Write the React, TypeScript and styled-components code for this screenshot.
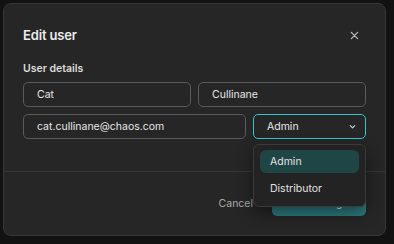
import styled, { createGlobalStyle } from "styled-components";

const GlobalStyle = createGlobalStyle`
  html, body {
    margin: 0;
    padding: 0;
    background: #121212;
    font-family: Inter, "Noto Sans", sans-serif;
    -webkit-font-smoothing: antialiased;
  }
`;

const Page = styled.div`
  width: 394px;
  height: 244px;
  padding: 3px 0 0 3px;
  box-sizing: border-box;
`;

const Dialog = styled.div`
  position: relative;
  width: 383px;
  height: 233px;
  box-sizing: border-box;
  background: #262626;
  border: 1px solid #363636;
  border-radius: 8px;
  display: flex;
  flex-direction: column;
`;

const Header = styled.div`
  display: flex;
  align-items: center;
  justify-content: space-between;
  padding: 21px 19px 0;
  height: 20px;
`;

const Title = styled.h2`
  margin: 0;
  font-size: 13px;
  font-weight: 600;
  letter-spacing: -0.15px;
  color: #ececec;
`;

const CloseButton = styled.button`
  border: none;
  background: none;
  padding: 0;
  margin-right: 5px;
  width: 14px;
  height: 14px;
  display: flex;
  align-items: center;
  justify-content: center;
  color: #bdbdbd;
  cursor: pointer;
`;

const Body = styled.div`
  padding: 17px 19px 32px;
  border-bottom: 1px solid #363636;
`;

const SectionLabel = styled.div`
  font-size: 10.5px;
  font-weight: 600;
  color: #dcdcdc;
  line-height: 14px;
  margin-bottom: 6px;
`;

const Row = styled.div<{ $cols: string }>`
  display: grid;
  grid-template-columns: ${({ $cols }) => $cols};
  gap: 7px;
  & + & {
    margin-top: 7px;
  }
`;

const Input = styled.div<{ $focused?: boolean }>`
  position: relative;
  height: 25px;
  box-sizing: border-box;
  border: 1px solid ${({ $focused }) => ($focused ? "#35c3cf" : "#5a5a5a")};
  border-radius: 5px;
  padding: 0 13px;
  display: flex;
  align-items: center;
  justify-content: space-between;
  font-size: 10.5px;
  color: #e6e6e6;
`;

const Chevron = styled.svg`
  width: 9px;
  height: 9px;
  color: #cfcfcf;
  margin-right: -5px;
`;

const Menu = styled.div`
  position: absolute;
  top: 29px;
  left: -1px;
  right: -1px;
  z-index: 2;
  background: #232323;
  border: 1px solid #3a3a3a;
  border-radius: 6px;
  box-shadow: 0 6px 16px rgba(0, 0, 0, 0.45);
  padding: 5px 6px 6px;
  display: flex;
  flex-direction: column;
  gap: 4px;
`;

const MenuItem = styled.div<{ $active?: boolean }>`
  height: 23px;
  border-radius: 6px;
  padding: 0 10px;
  display: flex;
  align-items: center;
  font-size: 10.5px;
  color: #e2e2e2;
  background: ${({ $active }) => ($active ? "#1f4545" : "transparent")};
`;

const Footer = styled.div`
  flex: 1;
  display: flex;
  justify-content: flex-end;
  align-items: flex-start;
  padding: 19px 19px 0;
  gap: 5px;
`;

const GhostButton = styled.button`
  border: none;
  background: none;
  height: 25px;
  padding: 0 14px;
  font-family: inherit;
  font-size: 10.5px;
  color: #a9a9a9;
`;

const PrimaryButton = styled.button`
  border: none;
  height: 25px;
  width: 94px;
  border-radius: 5px;
  background: #2c7a7e;
  font-family: inherit;
  font-size: 10.5px;
  font-weight: 500;
  color: #d7eeee;
`;

export default function App() {
  return (
    <>
      <GlobalStyle />
      <Page>
        <Dialog>
          <Header>
            <Title>Edit user</Title>
            <CloseButton aria-label="Close">
              <svg width="9" height="9" viewBox="0 0 10 10" fill="none">
                <path
                  d="M1.5 1.5l7 7M8.5 1.5l-7 7"
                  stroke="currentColor"
                  strokeWidth="1.4"
                  strokeLinecap="round"
                />
              </svg>
            </CloseButton>
          </Header>
          <Body>
            <SectionLabel>User details</SectionLabel>
            <Row $cols="1fr 1fr">
              <Input>Cat</Input>
              <Input>Cullinane</Input>
            </Row>
            <Row $cols="223px 1fr">
              <Input>cat.cullinane@chaos.com</Input>
              <Input $focused>
                Admin
                <Chevron viewBox="0 0 10 10" fill="none">
                  <path
                    d="M2.5 4l2.5 2.5L7.5 4"
                    stroke="currentColor"
                    strokeWidth="1.3"
                    strokeLinecap="round"
                    strokeLinejoin="round"
                  />
                </Chevron>
                <Menu>
                  <MenuItem $active>Admin</MenuItem>
                  <MenuItem>Distributor</MenuItem>
                </Menu>
              </Input>
            </Row>
          </Body>
          <Footer>
            <GhostButton>Cancel</GhostButton>
            <PrimaryButton>Save changes</PrimaryButton>
          </Footer>
        </Dialog>
      </Page>
    </>
  );
}
